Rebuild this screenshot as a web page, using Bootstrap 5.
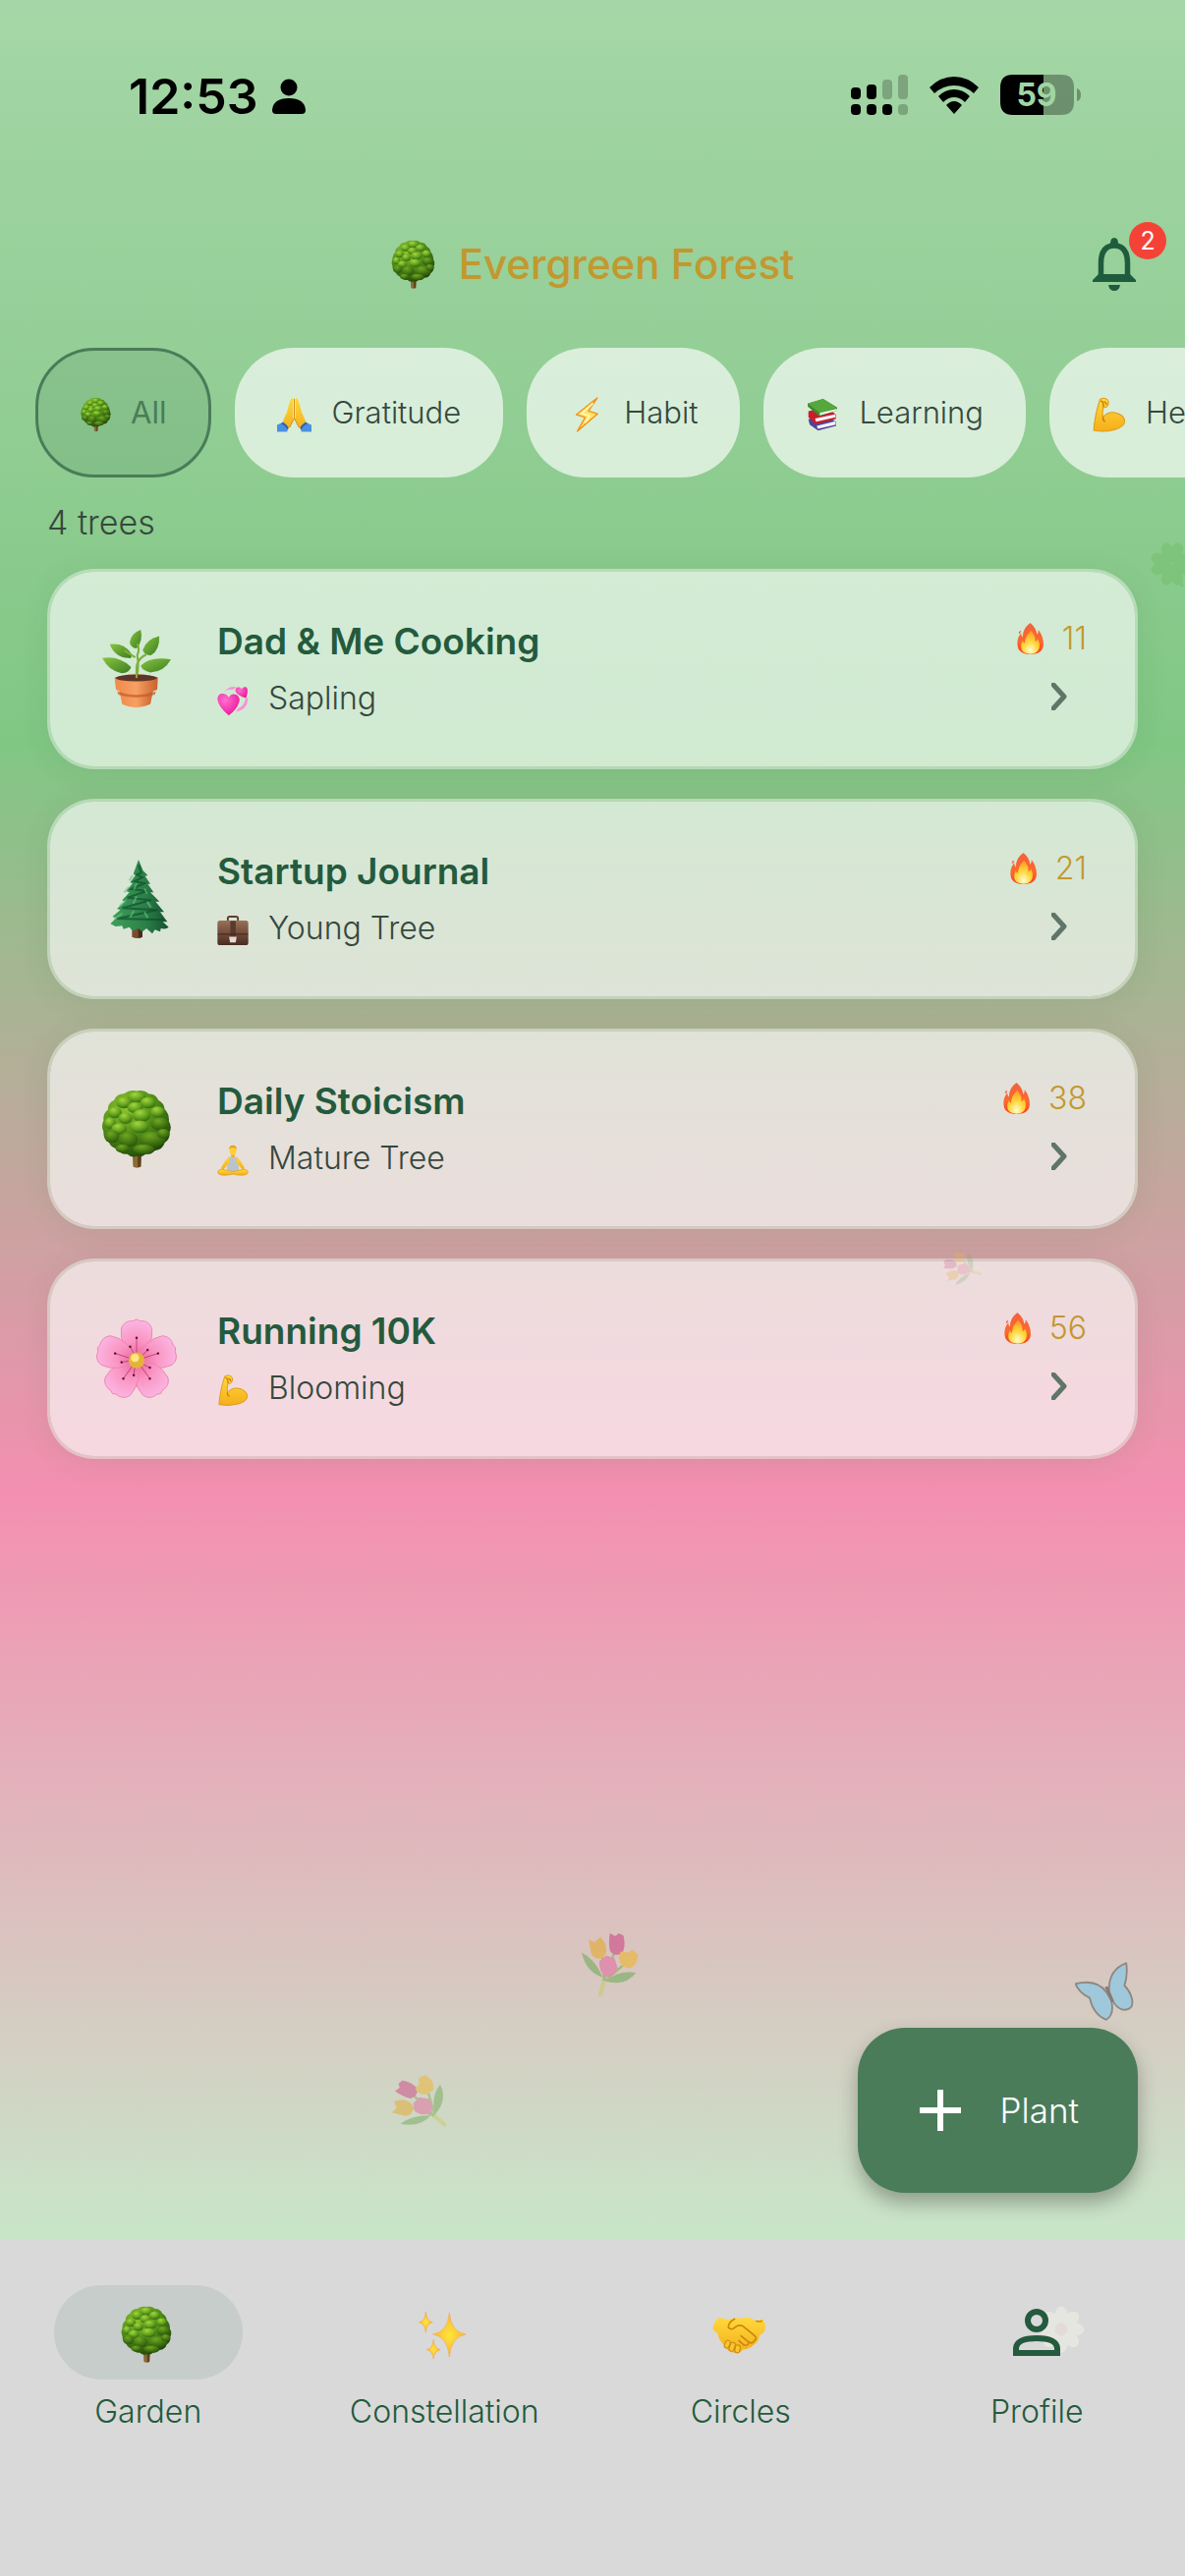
<!DOCTYPE html>
<html lang="en">
<head>
<meta charset="utf-8">
<meta name="viewport" content="width=device-width, initial-scale=1">
<title>Evergreen Forest</title>
<link href="https://cdn.jsdelivr.net/npm/bootstrap@5.3.0/dist/css/bootstrap.min.css" rel="stylesheet">
<style>
:root{--leaf:#245a3d;--moss:#4a7c59;--gold:#c2982f;--ink:#36483d}
body{font-family:Inter,"Liberation Sans",sans-serif;color:var(--ink);background:#d9d9d9;overflow-x:hidden}
svg{display:block;flex:none}
.garden-sky{background:linear-gradient(180deg,#a5d6a7 0%,#81c784 33.3%,#f48fb1 66.6%,#c8e6c9 100%);padding-bottom:47px}
.status-row{padding:72px 106px 0 131px;height:176px;color:#000}
.clock{font-size:50px;font-weight:600;line-height:52px}
.focus-gap{gap:14px}
.status-icons{gap:22px}
.battery-text{font:700 32px/41px Inter,sans-serif;fill:#a0d6a2}
.top-row{height:138px;padding:0 42px}
.side-col{flex:1 1 0}
.page-title{font-size:42px;line-height:52px;font-weight:500;color:var(--gold)}
.bell-btn{width:60px;height:60px}
.alert-count{top:-13px;right:-23px;width:38px;height:38px;font-size:25px;line-height:38px;background:#f44336;color:#fff}
.chip-row{padding:40px 0 0 36px;gap:24px;overflow:hidden}
.chip{height:132px;padding:0 43px;border-radius:60px;border:0;gap:20px;background:rgba(255,255,255,.65);font-size:31px;font-weight:300;color:var(--ink)}
.chip svg{margin-top:4px}
.chip.active{background:rgba(74,124,89,.15);border:3px solid var(--moss);color:var(--moss);font-weight:400}
.tree-count{font-size:34px;line-height:40px;font-weight:300;padding:26px 48px 27px}
.tree-list{padding:0 48px;gap:30px}
.tree-card{min-height:204px;border:3px solid rgba(220,235,220,.55);border-radius:48px;background:rgba(250,252,251,.66);background-clip:padding-box;padding:0 49px 0 42px;gap:36px;box-shadow:0 4px 30px rgba(60,90,60,.09);color:var(--ink)}
.tree-pic{width:92px}
.tree-name{font-size:37px;line-height:60px;font-weight:600;color:var(--leaf)}
.tree-stage{font-size:32px;line-height:56px;font-weight:300;gap:20px}
.tree-stage svg{margin-top:4px}
.streak{font-size:32px;line-height:56px;font-weight:300;color:var(--gold);gap:18px}
.go{width:56px;height:62px}
.plant-btn{height:168px;border:0;border-radius:48px;background:var(--moss);color:#fff;font-size:35px;font-weight:300;gap:25px;padding:0 60px 0 48px;margin-right:48px;box-shadow:0 10px 20px rgba(0,0,0,.3)}
.tab-row{background:#d9d9d9;padding:47px 0 146px}
.tab-item{flex:1 1 0;font-size:32px;line-height:42px;color:var(--leaf);font-weight:300}
.pill{width:192px;height:96px;border-radius:48px;margin-bottom:12px}
.pill.on{background:#c7cdca}
.pill svg{margin:4px 4px 0 0}
.pill .front{position:relative;z-index:1;margin:0}
.drift{position:absolute;pointer-events:none}
</style>
<script src="https://cdn.jsdelivr.net/npm/bootstrap@5.3.0/dist/js/bootstrap.bundle.min.js"></script>
</head>
<body>
<svg width="0" height="0" class="position-absolute" aria-hidden="true">
<defs>
<radialGradient id="gCrown" cx=".35" cy=".25" r=".8"><stop offset="0" stop-color="#8fc62e"/><stop offset=".55" stop-color="#4f8d17"/><stop offset="1" stop-color="#1f4508"/></radialGradient>
<radialGradient id="gPuff" cx=".4" cy=".25" r=".75"><stop offset="0" stop-color="#a4d63c"/><stop offset=".6" stop-color="#61a01e" /><stop offset="1" stop-color="#35690f"/></radialGradient>
<radialGradient id="gPuffD" cx=".4" cy=".25" r=".8"><stop offset="0" stop-color="#6fa822"/><stop offset="1" stop-color="#265208"/></radialGradient>
<linearGradient id="gSkin" x2="0" y2="1"><stop offset="0" stop-color="#ffd93b"/><stop offset="1" stop-color="#f5ae1b"/></linearGradient>
<linearGradient id="gBrown" x2="0" y2="1"><stop offset="0" stop-color="#9a7058"/><stop offset="1" stop-color="#4a2c20"/></linearGradient>
<linearGradient id="gPot" x2="1" y2="0"><stop offset="0" stop-color="#f08a4b"/><stop offset=".5" stop-color="#f7a062"/><stop offset="1" stop-color="#c9612c"/></linearGradient>
<linearGradient id="gLeaf" x2="1" y2="1"><stop offset="0" stop-color="#8ac53e"/><stop offset="1" stop-color="#3a7d22"/></linearGradient>
<linearGradient id="gFir" x2="1" y2="0"><stop offset="0" stop-color="#3fa05c"/><stop offset=".6" stop-color="#2a8048"/><stop offset="1" stop-color="#155230"/></linearGradient>
<linearGradient id="gFire" x2="0" y2="1"><stop offset="0" stop-color="#f4613b"/><stop offset=".6" stop-color="#fb6a2c"/><stop offset="1" stop-color="#f9431f"/></linearGradient>
<radialGradient id="gCore" cx=".5" cy=".85" r=".8"><stop offset="0" stop-color="#fffbd0"/><stop offset=".5" stop-color="#ffd83a"/><stop offset="1" stop-color="#fd9a2c"/></radialGradient>
<radialGradient id="gPetal" cx=".5" cy="1" r="1"><stop offset="0" stop-color="#ea5f98"/><stop offset=".5" stop-color="#fa94c2"/><stop offset="1" stop-color="#fbb6e2"/></radialGradient>
<radialGradient id="gHeart" cx=".35" cy=".3" r=".8"><stop offset="0" stop-color="#ff6fd0"/><stop offset="1" stop-color="#ea1297"/></radialGradient>
<radialGradient id="gStar"><stop offset="0" stop-color="#ffe53b"/><stop offset="1" stop-color="#fbb42f"/></radialGradient>

<symbol id="treeRound" viewBox="0 0 100 112">
<path d="M44 88l1 22q5 3 11 0l1-22z" fill="#8a6a35"/><path d="M51 88h6l-1 22-4 1z" fill="#5c4219"/>
<path d="M50 2q10-2 17 4 10 0 14 9 8 4 9 13 7 7 6 17 5 8 1 16 1 10-7 15-3 10-14 11-5 6-13 5-6 5-13 3-7 3-13-3-10 1-14-7-10-2-13-11-8-5-7-14-4-8 0-16-1-10 6-15 0-10 9-14 4-9 14-9 8-6 18-4z" fill="url(#gCrown)"/>
<g fill="url(#gPuff)"><ellipse cx="50" cy="11" rx="13" ry="8"/><ellipse cx="32" cy="19" rx="11" ry="8"/><ellipse cx="66" cy="19" rx="11" ry="8"/><ellipse cx="48" cy="26" rx="11" ry="8"/><ellipse cx="19" cy="33" rx="10" ry="8"/><ellipse cx="80" cy="32" rx="10" ry="8"/><ellipse cx="57" cy="37" rx="13" ry="9"/><ellipse cx="34" cy="41" rx="10" ry="8"/><ellipse cx="12" cy="48" rx="8" ry="8"/><ellipse cx="25" cy="56" rx="11" ry="8"/><ellipse cx="54" cy="53" rx="14" ry="9"/></g>
<g fill="url(#gPuffD)"><ellipse cx="83" cy="49" rx="13" ry="9"/><ellipse cx="15" cy="67" rx="11" ry="9"/><ellipse cx="38" cy="71" rx="14" ry="11"/><ellipse cx="72" cy="71" rx="19" ry="11"/><ellipse cx="30" cy="84" rx="10" ry="6"/><ellipse cx="60" cy="85" rx="15" ry="7"/><ellipse cx="88" cy="63" rx="9" ry="7"/></g>
</symbol>
<symbol id="potPlant" viewBox="0 0 100 114">
<g fill="url(#gLeaf)"><path d="M56 0q4 16-6 27-9-1-10-9 2-13 16-18z"/><path d="M83 9q1 20-12 28-10 0-12-8Q64 13 83 9z"/><path d="M11 21q20-3 31 13 2 8-3 7-20 0-28-20z"/><path d="M0 41q24-4 42 13-2 8-14 9Q10 60 0 41z"/><path d="M100 43q-10 18-30 19-12-3-14-10 14-14 44-9z"/></g>
<path d="M51 20q4 8 0 17 3 15-1 32M50 52q4-12 14-16M48 40l-16-10" fill="none" stroke="#7fae3d" stroke-width="3"/>
<path d="M24 84l5 24q20 10 41 0l5-24z" fill="url(#gPot)"/><path d="M18 69q32-9 63 0l-1 18q-30 12-60 0z" fill="url(#gPot)"/>
<ellipse cx="49.500" cy="70" rx="30" ry="5" fill="#5c3526"/><path d="M22 89q28 11 56 0l-1 5q-27 9-54 0z" fill="#c25c2b" opacity=".7"/><path d="M50 52v18" stroke="#7fae3d" stroke-width="3"/>
</symbol>
<symbol id="firTree" viewBox="0 0 100 120">
<path d="M43 95h16v23q-8 4-16 0z" fill="#7a4a2e"/><path d="M52 95h7v23l-6 2z" fill="#4a2a18"/>
<path d="M53 0l7 17 7 7-4 1 8 12-4 0 9 13-5 0 14 14-6 0 13 16-6 0 11 15-7 0 9 8q-4 4-12 2l-1 5-8-3-4 6-9-8-6 5-7-5-8 4-5-6-9 3-2-5-10 1-8-4 9-9-6-2 12-10-5-2 12-11-4-2 11-12-5-2 10-12-4-1 9-12-4-1z" fill="url(#gFir)"/>
<path d="M53 8l4 12-7 3 9 4-12 6 15 3-20 9 24 3-30 10 36 4-44 12 54 3-62 13 72 2" fill="none" stroke="#0f4a2a" stroke-width="3" opacity=".65"/>
<path d="M44 24l-5 8M38 42l-7 8M50 36l-4 10M62 44l4 8M34 62l-10 9M50 56l-5 11M66 64l6 9M28 82l-12 9M46 78l-6 10M62 80l5 9" stroke="#6cc47c" stroke-width="3" opacity=".6"/>
</symbol>
<symbol id="blossom" viewBox="0 0 100 100">
<path id="pt" d="M50 53Q28 35 31 12q4-10 15-9l4-2 4 2q11-1 15 9 3 23-19 41z" fill="url(#gPetal)" stroke="#ee7db0" stroke-width="1"/>
<use href="#pt" transform="rotate(72 50 52)"/><use href="#pt" transform="rotate(144 50 52)"/><use href="#pt" transform="rotate(216 50 52)"/><use href="#pt" transform="rotate(288 50 52)"/>
<g stroke="#b5326d" stroke-width=".9"><path id="st" d="M50 50V24M50 50L42 35"/><use href="#st" transform="rotate(72 50 52)"/><use href="#st" transform="rotate(144 50 52)"/><use href="#st" transform="rotate(216 50 52)"/><use href="#st" transform="rotate(288 50 52)"/></g>
<g fill="#57123a"><g id="dt"><circle cx="50" cy="24" r="1.500"/><circle cx="42" cy="35" r="1.500"/></g><use href="#dt" transform="rotate(72 50 52)"/><use href="#dt" transform="rotate(144 50 52)"/><use href="#dt" transform="rotate(216 50 52)"/><use href="#dt" transform="rotate(288 50 52)"/></g>
<circle cx="50" cy="52" r="10" fill="#e5b23c"/><circle cx="48" cy="49" r="5" fill="#ffe680"/>
</symbol>
<symbol id="pray" viewBox="0 0 100 100">
<path d="M47 3q-6-4-9 6L28 44 14 76l17 20 15-30V8zM53 3q6-4 9 6l10 35 14 32-17 20-15-30V8z" fill="url(#gSkin)"/><path d="M50 4v56L36 88M50 60l14 28" stroke="#dc8f16" stroke-width="3" fill="none"/>
<path d="M0 80l17-8q10 6 16 15l-4 13H0zM100 80l-17-8q-10 6-16 15l4 13h29z" fill="#4a90e0"/><path d="M17 72q10 6 16 15l-3 6Q22 82 12 76zM83 72q-10 6-16 15l3 6q8-11 18-17z" fill="#2b62b5"/>
</symbol>
<symbol id="bolt" viewBox="0 0 100 100"><path d="M80 3L21 50l25 8L24 97l57-49-26-8z" fill="#ffe468" stroke="#f0961e" stroke-width="4" stroke-linejoin="round"/><path d="M68 18L36 46l22 8-12 18" fill="none" stroke="#fff6b0" stroke-width="5"/></symbol>
<symbol id="books" viewBox="0 0 100 100">
<path d="M8 64l52-14 31 22v12L37 98 12 80z" fill="#53429a"/><path d="M33 84l56-14 1 10-54 13z" fill="#f2f2f8"/><path d="M8 40l56-12 26 22v13L30 79 8 58z" fill="#c81e2c"/><path d="M28 62l60-13 1 9-58 13z" fill="#f8f3f3"/><path d="M6 17L52 3l42 26-1 9-52 17L6 26z" fill="#3d8a2e"/><path d="M6 17L52 3l42 26-52 16z" fill="#56a83c"/><path d="M42 45l51-13v6L42 52z" fill="#eef5ea"/>
</symbol>
<symbol id="muscle" viewBox="0 0 100 100"><path d="M24 6q12-8 22 1 6 8 0 18-4 6-12 4-4 16-1 28 14-16 34-13 28 5 29 26-2 17-30 24-30 8-60 2Q8 56 24 6z" fill="url(#gSkin)" stroke="#e09a16" stroke-width="3"/><path d="M33 57q-2 9 6 13M26 10q10 2 8 18M36 12q6 2 8 10" fill="none" stroke="#c87c10" stroke-width="4"/></symbol>
<symbol id="hearts" viewBox="0 0 100 100"><path d="M20 22Q44 0 62 8L50 16Q36 12 20 22zM98 42q0 36-38 44l6-10q22-10 24-34z" fill="#f793dc"/><path d="M37 98Q4 70 1 46 2 26 20 28q12 2 17 12Q46 24 62 32q14 10 7 26-6 20-32 40z" fill="url(#gHeart)"/><path d="M92 42Q64 34 58 20q0-14 12-12 6 2 8 6 6-10 15-6 8 8-1 34z" fill="url(#gHeart)"/></symbol>
<symbol id="briefcase" viewBox="0 0 100 100"><path d="M34 20v-9q0-5 6-5h20q6 0 6 5v9" fill="none" stroke="#5c4034" stroke-width="6"/><rect x="1" y="19" width="98" height="78" rx="8" fill="url(#gBrown)"/><path d="M42 20h17v50H42z" fill="#5a3a2c"/><path d="M2 62h96" stroke="#3e241a" stroke-width="3"/><path d="M38 70h24l-3 18H41z" fill="#e4dcd4"/></symbol>
<symbol id="lotus" viewBox="0 0 100 100"><path d="M36 38q14 5 28 0l6 42q-20 10-40 0z" fill="#b9c3cc"/><path d="M37 38Q25 50 12 76l8 4 20-24zM63 38q12 12 25 38l-8 4-20-24z" fill="url(#gSkin)"/><path d="M44 28h12v10q-6 6-12 0z" fill="#f0b028"/><ellipse cx="50" cy="19" rx="11" ry="14" fill="#ffd03a"/><path d="M38 16q0-14 12-14t12 14q-5-7-12-7t-12 7z" fill="#e9a01a"/><path d="M2 86q2-8 14-7l34 7 34-7q12-1 14 7 0 10-14 11-16 2-34-3-18 5-34 3Q2 96 2 86z" fill="url(#gSkin)" stroke="#d9920f" stroke-width="2"/></symbol>
<symbol id="fire" viewBox="0 0 84 100"><path d="M42 0q20 17 21 37 6-4 5-15 16 22 16 45 0 32-42 33Q0 99 1 65q0-20 12-33 0 10 5 13Q17 18 42 0z" fill="url(#gFire)"/><path d="M5 33q0-8 8-9 0 6-5 10z" fill="#f26350"/><path d="M44 24q16 18 14 36 6-3 8-9 8 14 5 28-5 19-29 20Q16 98 13 80q-2-12 5-24 2 8 7 9Q24 44 44 24z" fill="url(#gCore)"/></symbol>
<symbol id="sparkles" viewBox="0 0 100 100"><g fill="url(#gStar)" stroke="#f6ac4c" stroke-width="1.500"><path d="M64 4q3 40 34 45-31 5-34 47-3-42-34-47Q61 44 64 4z"/><path d="M15 2q1 19 14 22-13 3-14 21Q14 27 1 24 14 21 15 2z"/><path d="M31 60q1 18 14 21-13 3-14 19-1-16-14-19 13-3 14-21z"/></g></symbol>
<symbol id="handshake" viewBox="0 0 100 72"><path d="M13 3Q26 9 36 6l10-2 8 1 14-2q10 3 14 7l12-4q8 8 5 22-4 6-10 9-1 12-12 19-10 8-20 8-4 8-14 6-14-1-20-14Q12 46 10 34L1 26Q2 10 13 3z" fill="url(#gSkin)"/><path d="M42 6Q30 13 30 22q6 7 14-1 6-5 14-1l22 18q5 6-1 9M79 47q-3 7-10 3L54 38M69 50q-2 8-10 5l-9-8M83 10q8 2 10 0" fill="none" stroke="#c8860f" stroke-width="3" stroke-linecap="round"/><g fill="#fbc62d" stroke="#cc8a14" stroke-width="2"><rect x="24" y="46" width="9" height="15" rx="4.500" transform="rotate(25 28 53)"/><rect x="33" y="50" width="9" height="17" rx="4.500" transform="rotate(20 37 58)"/><rect x="43" y="55" width="9" height="15" rx="4.500" transform="rotate(10 47 62)"/></g></symbol>
<symbol id="bouquet" viewBox="0 0 100 110"><path d="M0 36q22 10 36 42Q8 70 0 36zM92 70Q66 64 40 84q34 10 52-14z" fill="#7cae64"/><path d="M34 34l4 46M56 34L38 82M76 52L40 84M38 80l-8 30" fill="none" stroke="#8db35c" stroke-width="4"/><path d="M38 84l-7 26" stroke="#c6cf70" stroke-width="7"/><path d="M12 14l10 4 10-9 8 12q6 18-6 24-12 4-18-8z" fill="#e3ad3a"/><path d="M48 3l9 5 6-5 8 4q5 22-4 31-12 5-19-5-3-14 0-30z" fill="#cf5189"/><path d="M66 34l12 2 8-5 10 8q-2 20-16 24-16-4-17-19z" fill="#ecb73b"/><path d="M30 50l12-9 14 5 5 16q-8 16-20 15-12-8-11-27z" fill="#e274a4"/></symbol>
<symbol id="butterfly" viewBox="0 0 100 100"><g fill="#92c8e2" stroke="#7d7873" stroke-width="3" stroke-linejoin="round"><path d="M58 50Q56 14 87 2q3 20-3 38 10 10 13 24 3 18-16 17-12-4-17-16z"/><path d="M54 52Q38 28 1 37q5 14 24 24 6 28 28 37 14-8 9-32z"/></g><path d="M53 42l11 26" stroke="#75685f" stroke-width="5"/></symbol>
<symbol id="clover" viewBox="0 0 100 100"><g fill="#69b85a"><path id="cl" d="M50 48Q26 36 28 16 32 4 43 8l7 7 7-7q11-4 15 8 2 20-22 32z"/><use href="#cl" transform="rotate(90 50 50)"/><use href="#cl" transform="rotate(180 50 50)"/><use href="#cl" transform="rotate(270 50 50)"/></g><path d="M50 50q6 30 22 46" fill="none" stroke="#69b85a" stroke-width="6"/></symbol>
<symbol id="daisy" viewBox="0 0 100 100"><g fill="#f3f3ea"><ellipse id="dp" cx="50" cy="22" rx="14" ry="21"/><use href="#dp" transform="rotate(45 50 50)"/><use href="#dp" transform="rotate(90 50 50)"/><use href="#dp" transform="rotate(135 50 50)"/><use href="#dp" transform="rotate(180 50 50)"/><use href="#dp" transform="rotate(225 50 50)"/><use href="#dp" transform="rotate(270 50 50)"/><use href="#dp" transform="rotate(315 50 50)"/></g><circle cx="50" cy="50" r="14" fill="#eee0d4"/></symbol>
<symbol id="chev" viewBox="0 0 16 28"><path d="M2 2l11 12L2 26" fill="none" stroke="#5f7569" stroke-width="5" stroke-linecap="round" stroke-linejoin="round"/></symbol>
</defs>
</svg>

<div class="d-flex flex-column min-vh-100 position-relative overflow-hidden">
<div class="garden-sky flex-grow-1 d-flex flex-column">
  <div class="status-row d-flex justify-content-between align-items-start">
    <div class="focus-gap d-flex align-items-center">
      <span class="clock">12:53</span>
      <svg width="34" height="36" viewBox="0 0 34 36" aria-label="Focus"><circle cx="17" cy="9" r="8.500"/><path d="M0 32q1-12 17-12t17 12q0 4-4 4H4q-4 0-4-4z"/></svg>
    </div>
    <div class="status-icons d-flex align-items-center mt-1">
      <svg width="58" height="42" viewBox="0 0 58 42" aria-label="Signal"><g><rect y="13" width="10" height="12" rx="4"/><rect x="16" y="10" width="10" height="15" rx="4"/><rect y="30" width="10" height="11" rx="4"/><rect x="16" y="30" width="10" height="11" rx="4"/><rect x="32" y="30" width="10" height="11" rx="4"/></g><g opacity=".22"><rect x="32" y="5" width="10" height="20" rx="4"/><rect x="48" width="10" height="25" rx="4"/><rect x="48" y="30" width="10" height="11" rx="4"/></g></svg>
      <svg width="50" height="38" viewBox="0 0 50 38" aria-label="Wi-Fi"><path d="M0 11Q11 0 25 0t25 11l-5 6Q36 9 25 9T5 17zM9 20Q16 13 25 13t16 7l-5 6q-5-5-11-5t-11 5zM17 29q4-4 8-4t8 4l-8 9z"/></svg>
      <svg width="82" height="42" viewBox="0 0 82 42" aria-label="Battery"><path d="M44 0H13Q0 0 0 13v15q0 13 13 13h31z"/><path d="M44 0h18q13 0 13 13v15q0 13-13 13H44z" opacity=".32"/><path d="M78 14q4 1 4 6.500t-4 6.500z" opacity=".32"/><text class="battery-text" x="37" y="32" text-anchor="middle">59</text></svg>
    </div>
  </div>

  <header class="top-row d-flex align-items-center pt-5">
    <div class="side-col"></div>
    <h1 class="page-title m-0 d-flex align-items-center gap-4"><svg width="45" height="50"><use href="#treeRound"/></svg>Evergreen Forest</h1>
    <div class="side-col d-flex justify-content-end">
      <button type="button" class="bell-btn btn p-0 border-0 position-relative d-flex align-items-center justify-content-center" aria-label="Notifications">
        <svg width="44" height="54" viewBox="0 0 44 54"><path d="M8.500 41V26Q8.500 8 22 8t13.500 18v15" fill="none" stroke="#1f5c3e" stroke-width="5.500"/><path d="M22 0q4 0 4 6h-8q0-6 4-6zM0 45v-2l6-6h32l6 6v2zM16 48h12q-1 6-6 6t-6-6z" fill="#1f5c3e"/></svg>
        <span class="alert-count position-absolute rounded-circle">2</span>
      </button>
    </div>
  </header>

  <div class="chip-row d-flex">
    <button type="button" class="chip active flex-shrink-0 d-flex align-items-center"><svg width="31" height="36"><use href="#treeRound"/></svg>All</button>
    <button type="button" class="chip flex-shrink-0 d-flex align-items-center"><svg width="35" height="36"><use href="#pray"/></svg>Gratitude</button>
    <button type="button" class="chip flex-shrink-0 d-flex align-items-center"><svg width="36" height="36"><use href="#bolt"/></svg>Habit</button>
    <button type="button" class="chip flex-shrink-0 d-flex align-items-center"><svg width="34" height="34"><use href="#books"/></svg>Learning</button>
    <button type="button" class="chip flex-shrink-0 d-flex align-items-center"><svg width="35" height="36"><use href="#muscle"/></svg>Health</button>
  </div>

  <div class="tree-count">4 trees</div>

  <main class="tree-list d-flex flex-column">
    <a href="#" class="tree-card d-flex align-items-center text-decoration-none">
      <div class="tree-pic d-flex justify-content-center"><svg width="70" height="80"><use href="#potPlant"/></svg></div>
      <div class="flex-grow-1"><div class="tree-name">Dad &amp; Me Cooking</div><div class="tree-stage d-flex align-items-center"><svg width="32" height="32"><use href="#hearts"/></svg>Sapling</div></div>
      <div class="d-flex flex-column align-items-end"><div class="streak d-flex align-items-center"><svg width="29" height="32"><use href="#fire"/></svg>11</div><div class="go d-flex align-items-center justify-content-center"><svg width="16" height="28"><use href="#chev"/></svg></div></div>
    </a>
    <a href="#" class="tree-card d-flex align-items-center text-decoration-none">
      <div class="tree-pic d-flex justify-content-center"><svg width="68" height="80"><use href="#firTree"/></svg></div>
      <div class="flex-grow-1"><div class="tree-name">Startup Journal</div><div class="tree-stage d-flex align-items-center"><svg width="32" height="32"><use href="#briefcase"/></svg>Young Tree</div></div>
      <div class="d-flex flex-column align-items-end"><div class="streak d-flex align-items-center"><svg width="29" height="32"><use href="#fire"/></svg>21</div><div class="go d-flex align-items-center justify-content-center"><svg width="16" height="28"><use href="#chev"/></svg></div></div>
    </a>
    <a href="#" class="tree-card d-flex align-items-center text-decoration-none">
      <div class="tree-pic d-flex justify-content-center"><svg width="72" height="80"><use href="#treeRound"/></svg></div>
      <div class="flex-grow-1"><div class="tree-name">Daily Stoicism</div><div class="tree-stage d-flex align-items-center"><svg width="32" height="32"><use href="#lotus"/></svg>Mature Tree</div></div>
      <div class="d-flex flex-column align-items-end"><div class="streak d-flex align-items-center"><svg width="29" height="32"><use href="#fire"/></svg>38</div><div class="go d-flex align-items-center justify-content-center"><svg width="16" height="28"><use href="#chev"/></svg></div></div>
    </a>
    <a href="#" class="tree-card d-flex align-items-center text-decoration-none">
      <div class="tree-pic d-flex justify-content-center"><svg width="82" height="82"><use href="#blossom"/></svg></div>
      <div class="flex-grow-1"><div class="tree-name">Running 10K</div><div class="tree-stage d-flex align-items-center"><svg width="32" height="32"><use href="#muscle"/></svg>Blooming</div></div>
      <div class="d-flex flex-column align-items-end"><div class="streak d-flex align-items-center"><svg width="29" height="32"><use href="#fire"/></svg>56</div><div class="go d-flex align-items-center justify-content-center"><svg width="16" height="28"><use href="#chev"/></svg></div></div>
    </a>
  </main>

  <button type="button" class="plant-btn mt-auto align-self-end d-flex align-items-center">
    <svg width="72" height="72" viewBox="0 0 72 72"><path d="M36 15v42M15 36h42" stroke="#fff" stroke-width="6"/></svg>Plant
  </button>
</div>

<nav class="tab-row d-flex text-center">
  <a href="#" class="tab-item text-decoration-none d-flex flex-column align-items-center"><span class="pill on d-flex align-items-center justify-content-center"><svg width="52" height="58"><use href="#treeRound"/></svg></span>Garden</a>
  <a href="#" class="tab-item text-decoration-none d-flex flex-column align-items-center"><span class="pill d-flex align-items-center justify-content-center"><svg width="49" height="49"><use href="#sparkles"/></svg></span>Constellation</a>
  <a href="#" class="tab-item text-decoration-none d-flex flex-column align-items-center"><span class="pill d-flex align-items-center justify-content-center"><svg width="54" height="39"><use href="#handshake"/></svg></span>Circles</a>
  <a href="#" class="tab-item text-decoration-none d-flex flex-column align-items-center"><span class="pill d-flex align-items-center justify-content-center"><svg class="front" width="48" height="48" viewBox="0 0 48 48"><g fill="none" stroke="#245a3d" stroke-width="6"><circle cx="24" cy="12" r="9"/><path d="M3 45v-5q1-10 21-10t21 10v5z"/></g></svg></span>Profile</a>
</nav>

<svg class="drift" style="left:1168px;top:548px" width="50" height="52" opacity=".35"><use href="#clover"/></svg>
<svg class="drift" style="left:958px;top:1272px" width="42" height="36" viewBox="0 0 110 100" opacity=".25"><use href="#bouquet" width="100" height="110" transform="translate(0 100) rotate(-90)"/></svg>
<svg class="drift" style="left:592px;top:1966px" width="60" height="66" opacity=".65"><use href="#bouquet"/></svg>
<svg class="drift" style="left:398px;top:2110px" width="64" height="58" viewBox="0 0 110 100" opacity=".55"><use href="#bouquet" width="100" height="110" transform="rotate(-65 50 50)"/></svg>
<svg class="drift" style="left:1094px;top:1997px" width="60" height="60" opacity=".8"><use href="#butterfly"/></svg>
<svg class="drift" style="left:1056px;top:2346px" width="48" height="50" opacity=".5"><use href="#daisy"/></svg>
</div>
</body>
</html>
